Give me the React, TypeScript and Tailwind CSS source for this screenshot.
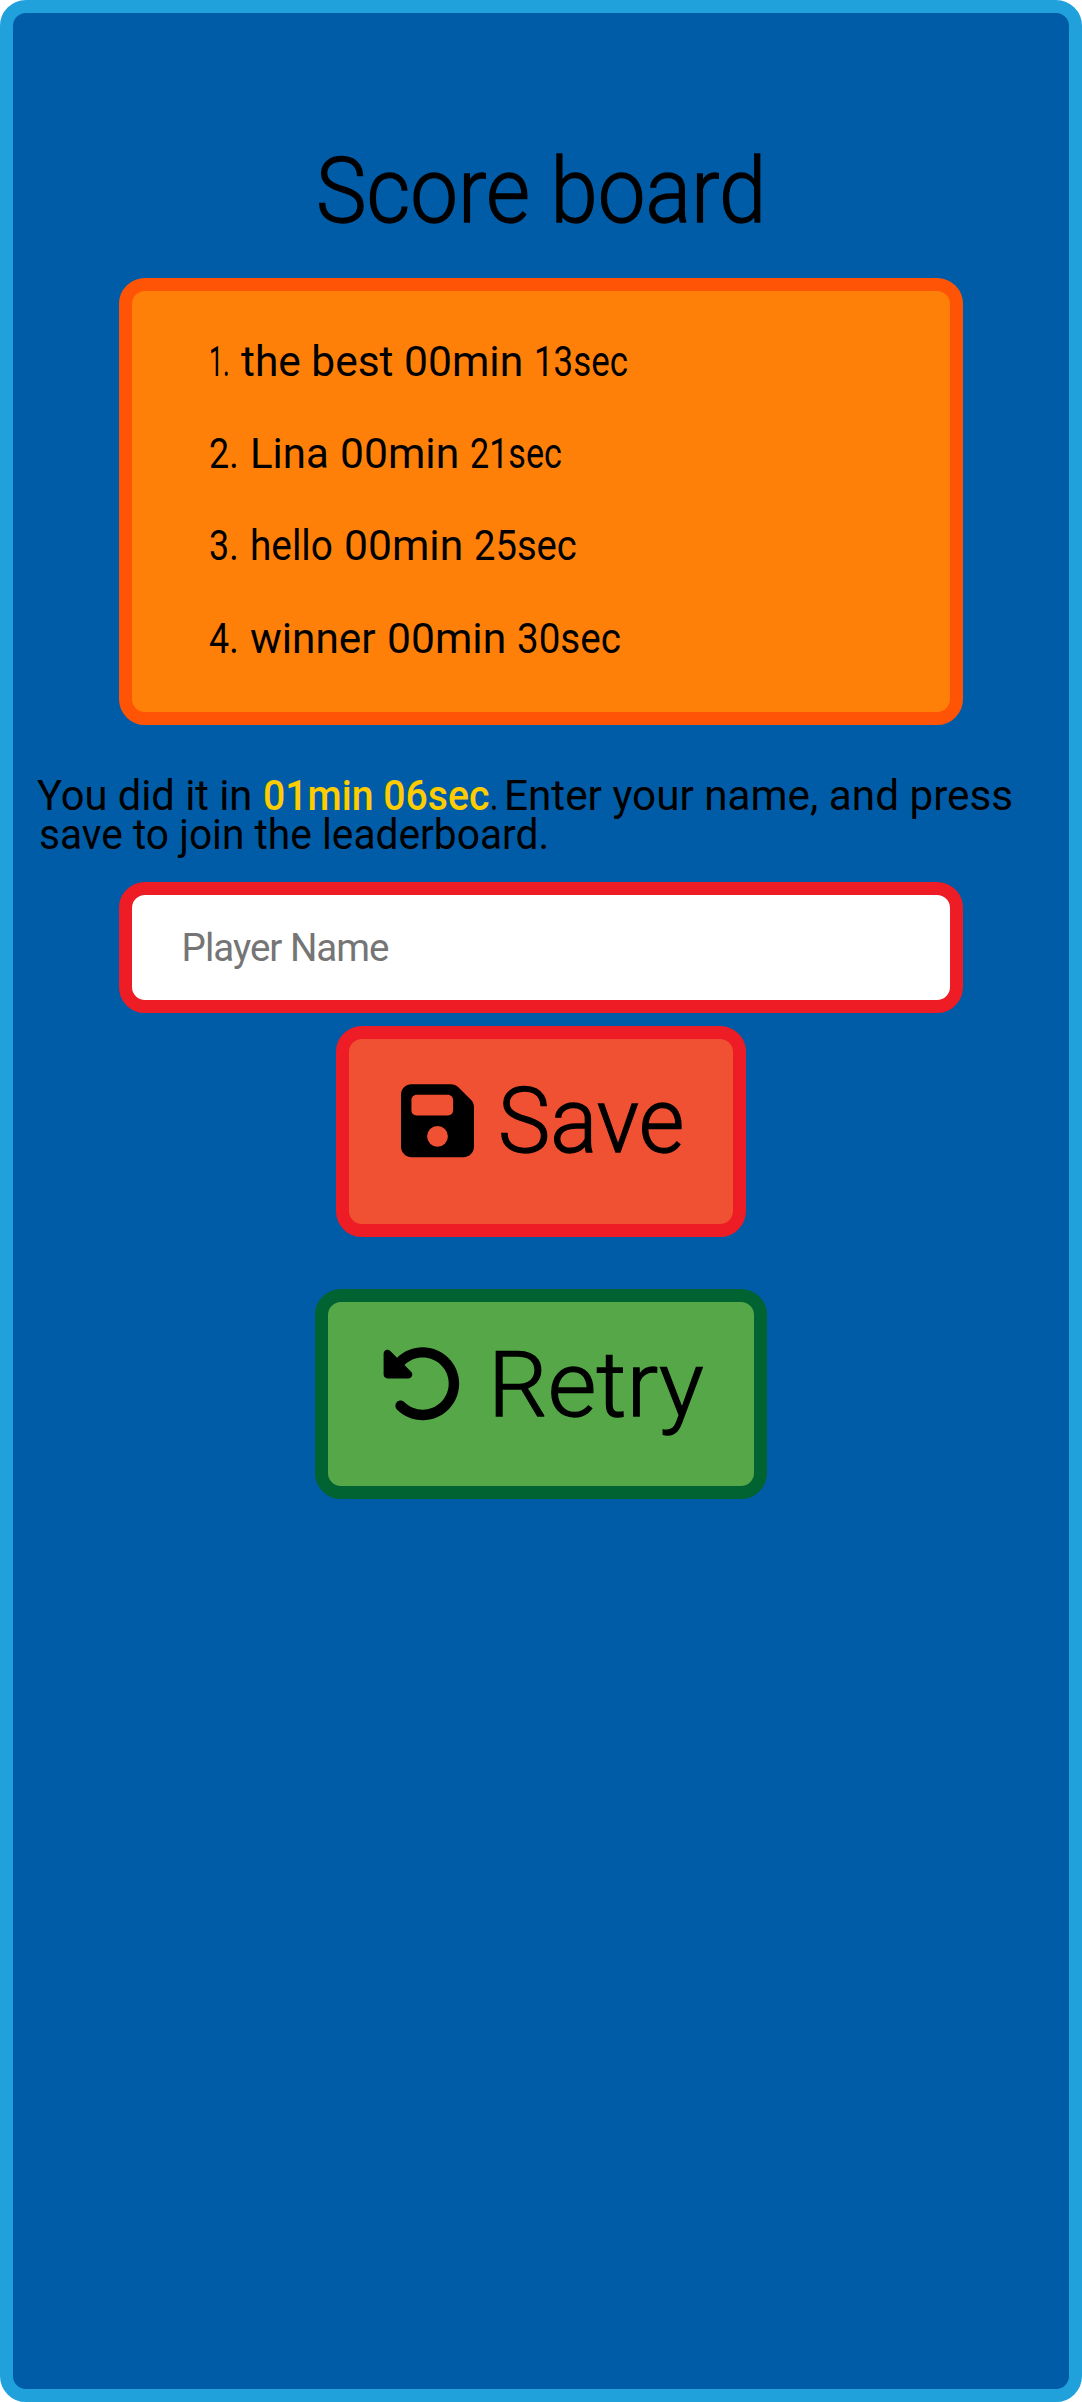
import { useLayoutEffect, useRef } from "react";
import { FaFloppyDisk, FaRotateLeft } from "react-icons/fa6";

type FitProps = { text: string; width: number; className?: string };

// Condenses or widens a run of text so that it fills the given width.
function Fit({ text, width, className = "" }: FitProps) {
  const ref = useRef<HTMLSpanElement>(null);
  useLayoutEffect(() => {
    const el = ref.current;
    if (el) el.style.transform = `scaleX(${width / el.offsetWidth})`;
  }, [text, width]);
  return (
    <span className={`inline-block shrink-0 whitespace-nowrap ${className}`} style={{ width }}>
      <span ref={ref} className="inline-block origin-left">
        {text}
      </span>
    </span>
  );
}

const scores = [
  { rank: "1.", rankWidth: 21, name: "the best", nameWidth: 152, min: "00min", minWidth: 119, sec: "13sec", secWidth: 94 },
  { rank: "2.", rankWidth: 30, name: "Lina", nameWidth: 79, min: "00min", minWidth: 119, sec: "21sec", secWidth: 92 },
  { rank: "3.", rankWidth: 30, name: "hello", nameWidth: 83, min: "00min", minWidth: 119, sec: "25sec", secWidth: 103 },
  { rank: "4.", rankWidth: 30, name: "winner", nameWidth: 126, min: "00min", minWidth: 119, sec: "30sec", secWidth: 104 },
  { rank: "5.", rankWidth: 30, name: "hello", nameWidth: 83, min: "00min", minWidth: 119, sec: "31sec", secWidth: 103 },
];

export default function App() {
  return (
    <main className="flex h-[2402px] w-[1082px] flex-col items-center rounded-[26px] border-[13px] border-[#20a1dc] bg-[#005ca7] pt-[133px] font-['Roboto',sans-serif] text-black">
      <h1 className="flex h-[92px] text-[90px] leading-[92px] font-light [-webkit-text-stroke:1.3px_black]">
        <Fit text="Score board" width={450} />
      </h1>

      <section className="mt-[40px] h-[446.7px] w-[80%] overflow-hidden rounded-[26px] border-[13px] border-[#ff5405] bg-[#ff8008] pt-6 pl-[77px]">
        <ol className="text-[43px] leading-[92.2px]">
          {scores.map((s) => (
            <li key={s.rank} className="flex h-[92.2px] gap-[11px]">
              <Fit text={s.rank} width={s.rankWidth} />
              <Fit text={s.name} width={s.nameWidth} />
              <Fit text={s.min} width={s.minWidth} />
              <Fit text={s.sec} width={s.secWidth} />
            </li>
          ))}
        </ol>
      </section>

      <div className="mt-[51px] w-full pl-[24px] text-[43px] leading-[39px]">
        <p className="flex h-[39px]">
          <Fit text="You did it in" width={215} />
          <Fit text="01min 06sec" width={226} className="ml-[11px] font-medium text-[#ffcc00]" />
          <Fit text="." width={8} className="ml-px" />
          <Fit text="Enter your name, and press" width={509} className="ml-[6px]" />
        </p>
        <p className="flex h-[39px] pl-[2px]">
          <Fit text="save to join the leaderboard." width={510} />
        </p>
      </div>

      <input
        type="text"
        placeholder="Player Name"
        className="mt-[28.5px] h-[131px] w-[80%] shrink-0 rounded-[26px] border-[13px] border-[#ee1c24] bg-white pl-[50px] text-[38.5px] tracking-[-1px] outline-none placeholder:text-[#757575]"
      />

      <button className="mt-[12.7px] flex h-[210.7px] w-[409.7px] items-start rounded-[26px] border-[13px] border-[#ee1c24] bg-[#f05133] pt-[37px] pl-[52px] text-[90px] leading-[92px] font-light">
        <FaFloppyDisk className="mt-[2.8px] h-[83.4px] w-[73px] shrink-0" />
        <Fit text="Save" width={186} className="ml-[24px] text-left [-webkit-text-stroke:1.3px_black]" />
      </button>

      <button className="mt-[52.3px] flex h-[209.7px] w-[451.5px] items-start rounded-[26px] border-[13px] border-[#006331] bg-[#55a747] pt-[38px] pl-[52.4px] text-[90px] leading-[92px] font-light">
        <FaRotateLeft className="mt-[1.8px] size-[83.4px] shrink-0" />
        <Fit text="Retry" width={216} className="ml-[24px] text-left [-webkit-text-stroke:1.3px_black]" />
      </button>
    </main>
  );
}
